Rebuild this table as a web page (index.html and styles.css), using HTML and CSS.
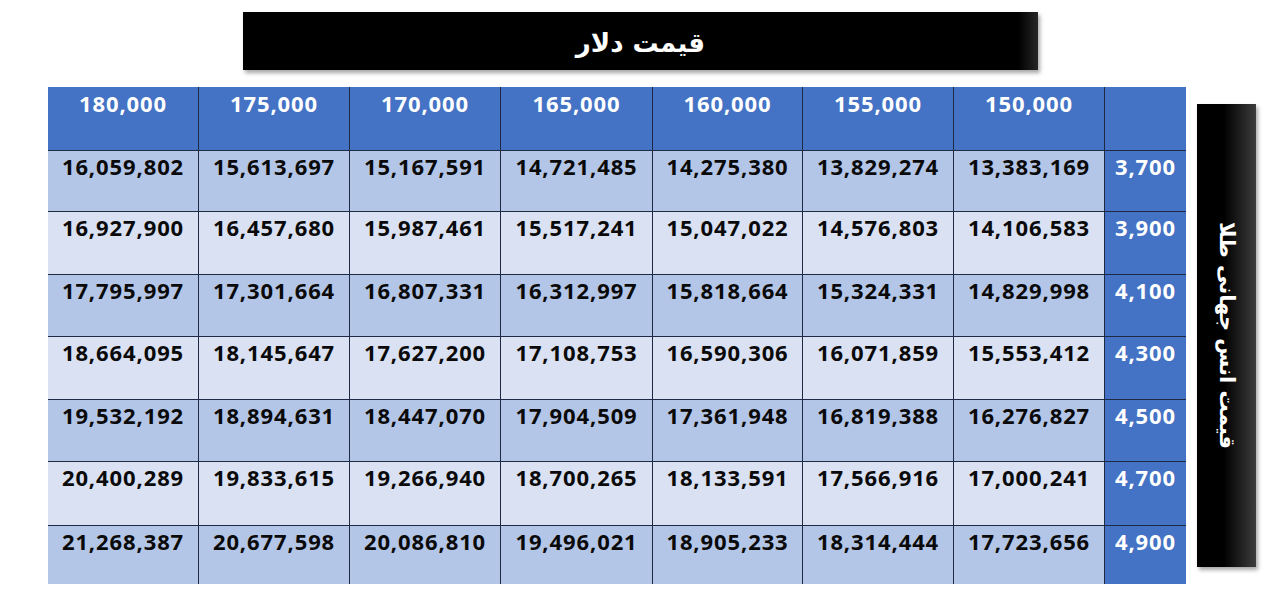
FILE: index.html
```html
<!DOCTYPE html>
<html lang="fa">
<head>
<meta charset="utf-8">
<title>قيمت دلار</title>
<link rel="stylesheet" href="styles.css">
</head>
<body>
<div class="page">
  <div class="title-bar"><span class="title-text">قيمت دلار</span></div>
  <div class="main">
    <div class="grid">
      <div class="cell head first">180,000</div>
      <div class="cell head">175,000</div>
      <div class="cell head">170,000</div>
      <div class="cell head">165,000</div>
      <div class="cell head">160,000</div>
      <div class="cell head">155,000</div>
      <div class="cell head">150,000</div>
      <div class="cell head"></div>

      <div class="cell dark first top">16,059,802</div>
      <div class="cell dark top">15,613,697</div>
      <div class="cell dark top">15,167,591</div>
      <div class="cell dark top">14,721,485</div>
      <div class="cell dark top">14,275,380</div>
      <div class="cell dark top">13,829,274</div>
      <div class="cell dark top">13,383,169</div>
      <div class="cell head top">3,700</div>

      <div class="cell light first top">16,927,900</div>
      <div class="cell light top">16,457,680</div>
      <div class="cell light top">15,987,461</div>
      <div class="cell light top">15,517,241</div>
      <div class="cell light top">15,047,022</div>
      <div class="cell light top">14,576,803</div>
      <div class="cell light top">14,106,583</div>
      <div class="cell head top">3,900</div>

      <div class="cell dark first top">17,795,997</div>
      <div class="cell dark top">17,301,664</div>
      <div class="cell dark top">16,807,331</div>
      <div class="cell dark top">16,312,997</div>
      <div class="cell dark top">15,818,664</div>
      <div class="cell dark top">15,324,331</div>
      <div class="cell dark top">14,829,998</div>
      <div class="cell head top">4,100</div>

      <div class="cell light first top">18,664,095</div>
      <div class="cell light top">18,145,647</div>
      <div class="cell light top">17,627,200</div>
      <div class="cell light top">17,108,753</div>
      <div class="cell light top">16,590,306</div>
      <div class="cell light top">16,071,859</div>
      <div class="cell light top">15,553,412</div>
      <div class="cell head top">4,300</div>

      <div class="cell dark first top">19,532,192</div>
      <div class="cell dark top">18,894,631</div>
      <div class="cell dark top">18,447,070</div>
      <div class="cell dark top">17,904,509</div>
      <div class="cell dark top">17,361,948</div>
      <div class="cell dark top">16,819,388</div>
      <div class="cell dark top">16,276,827</div>
      <div class="cell head top">4,500</div>

      <div class="cell light first top">20,400,289</div>
      <div class="cell light top">19,833,615</div>
      <div class="cell light top">19,266,940</div>
      <div class="cell light top">18,700,265</div>
      <div class="cell light top">18,133,591</div>
      <div class="cell light top">17,566,916</div>
      <div class="cell light top">17,000,241</div>
      <div class="cell head top">4,700</div>

      <div class="cell dark first top">21,268,387</div>
      <div class="cell dark top">20,677,598</div>
      <div class="cell dark top">20,086,810</div>
      <div class="cell dark top">19,496,021</div>
      <div class="cell dark top">18,905,233</div>
      <div class="cell dark top">18,314,444</div>
      <div class="cell dark top">17,723,656</div>
      <div class="cell head top">4,900</div>
    </div>
    <div class="side-bar"><span class="side-text">قيمت انس جهانی طلا</span></div>
  </div>
</div>
</body>
</html>
```

FILE: styles.css
```css
html, body {
  margin: 0;
  padding: 0;
  background: #ffffff;
}

.page {
  width: 1280px;
  height: 611px;
  display: flex;
  flex-direction: column;
  overflow: hidden;
}

.title-bar {
  margin-top: 12px;
  margin-left: 243px;
  width: 795px;
  height: 58px;
  background: linear-gradient(to right, #000 0%, #000 97.5%, #262626 100%);
  box-shadow: 2px 3px 4px rgba(0, 0, 0, 0.35);
  display: flex;
  align-items: center;
  justify-content: center;
}

.title-text {
  font-family: "DejaVu Sans", "Noto Sans", sans-serif;
  font-weight: bold;
  font-size: 26px;
  color: #ffffff;
  direction: rtl;
  margin-top: 4px;
}

.main {
  margin-top: 17px;
  margin-left: 48px;
  display: flex;
  align-items: flex-start;
  gap: 11px;
}

.grid {
  display: grid;
  grid-template-columns: 150px 151px 151px 152px 150px 151px 151px 82px;
  grid-template-rows: 63px 61px 63px 62px 63px 62px 64px 59px;
}

.cell {
  box-sizing: border-box;
  border-left: 1px solid #1e2a44;
  padding-top: 4px;
  text-align: center;
  font-family: "Open Sans", "Liberation Sans", sans-serif;
  font-weight: bold;
  font-size: 22px;
  line-height: 24px;
  letter-spacing: 0.9px;
  color: #0a0a0a;
}

.cell.first {
  border-left: none;
}

.cell.top {
  border-top: 1px solid #1e2a44;
  padding-top: 3px;
}

.head {
  background: #4472c4;
  color: #ffffff;
}

.dark {
  background: #b4c6e7;
}

.light {
  background: #d9e1f2;
}

.side-bar {
  margin-top: 17px;
  width: 59px;
  height: 463px;
  background: linear-gradient(to right, #000 0%, #000 45%, #3c3c3c 100%);
  box-shadow: 2px 3px 4px rgba(0, 0, 0, 0.35);
  display: flex;
  align-items: center;
  justify-content: center;
}

.side-text {
  writing-mode: vertical-rl;
  direction: rtl;
  font-family: "DejaVu Sans", "Noto Sans", sans-serif;
  font-weight: bold;
  font-size: 21px;
  color: #ffffff;
  white-space: nowrap;
}
```
